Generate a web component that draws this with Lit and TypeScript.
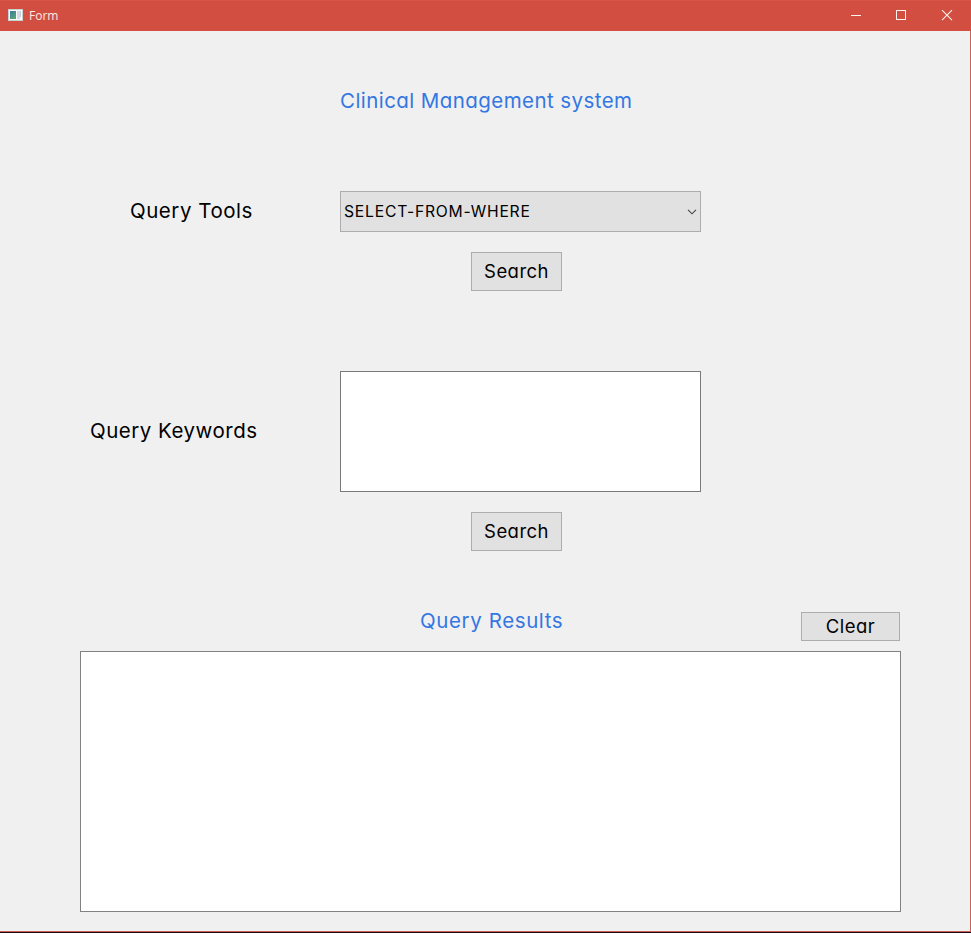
import { LitElement, html, css } from "lit";
import { customElement } from "lit/decorators.js";

@customElement("app-root")
export class AppRoot extends LitElement {
  static styles = css`
    :host {
      display: block;
      font-family: Inter, "Liberation Sans", sans-serif;
      font-feature-settings: "cv11";
      font-weight: 380;
      color: #000;
    }
    * { box-sizing: border-box; }
    .window {
      display: flex;
      flex-direction: column;
      width: 971px;
      height: 933px;
      background: #f0f0f0;
      border-bottom: 1px solid #1c0908;
      overflow: hidden;
    }
    .titlebar {
      display: flex;
      align-items: center;
      flex: none;
      height: 31px;
      padding-left: 8px;
      background: #d14e40;
      border-top: 1px solid #d7564c;
      color: #fbe9e4;
    }
    .titlebar svg { display: block; flex: none; }
    .app-icon { margin-bottom: 2px; }
    .caption {
      flex: 1;
      margin-left: 6px;
      font: 12px/16px "Open Sans", "Noto Sans", sans-serif;
    }
    .controls { display: flex; }
    .body {
      flex: 1;
      border-right: 1px solid #c9605a;
      border-bottom: 1px solid #c9605a;
      padding: 55px 69px 0 80px;
    }
    .text {
      font-size: 20.5px;
      line-height: 30px;
      white-space: nowrap;
    }
    .heading { color: #3477e2; }
    .title { margin-left: 260px; letter-spacing: 0.43px; }
    .row {
      display: grid;
      grid-template-columns: 260px 361px;
      align-items: center;
    }
    .row .text { padding-bottom: 2px; }
    .tools { margin-top: 75px; }
    .keywords { margin-top: 80px; }
    .tools-label { padding-left: 50px; letter-spacing: 0.53px; }
    .keywords-label { padding-left: 10px; letter-spacing: 0.5px; }
    .select {
      display: flex;
      align-items: center;
      justify-content: space-between;
      height: 41px;
      padding: 0 3px 0 3px;
      background: #e1e1e1;
      border: 1px solid #adadad;
      font-size: 15.7px;
      letter-spacing: 0.78px;
    }
    .select span { padding-bottom: 1px; }
    .field { height: 121px; background: #fff; border: 1px solid #7a7a7a; }
    .button {
      display: flex;
      align-items: center;
      justify-content: center;
      width: 91px;
      height: 39px;
      padding-bottom: 2px;
      background: #e1e1e1;
      border: 1px solid #adadad;
      font-size: 18.5px;
      letter-spacing: 0.45px;
    }
    .search { margin: 20px 0 0 391px; }
    .results-bar {
      display: flex;
      align-items: flex-start;
      justify-content: space-between;
      margin-top: 55px;
      height: 45px;
      padding-left: 340px;
    }
    .results-title { letter-spacing: 0.6px; }
    .clear { width: 99px; height: 29px; margin: 6px 1px 0 0; }
    .results { width: 821px; height: 261px; background: #fff; border: 1px solid #828282; }
  `;

  private button(label: string, kind: string) {
    return html`<div class="button ${kind}" role="button">${label}</div>`;
  }

  render() {
    return html`
      <div class="window">
        <div class="titlebar">
          <svg class="app-icon" width="15" height="12" viewBox="0 0 15 12">
            <defs>
              <linearGradient id="pane" x2="0.6" y2="1">
                <stop stop-color="#3f79a0" />
                <stop offset="1" stop-color="#55a57c" />
              </linearGradient>
            </defs>
            <rect width="15" height="12" fill="#c9d0d2" />
            <rect x="1" y="1" width="13" height="10" fill="#fafafa" />
            <rect x="2" y="2" width="6" height="8" fill="url(#pane)" />
            <rect x="9" y="2" width="3" height="8" fill="#d3dce4" />
            <rect x="12" y="2" width="1" height="6" fill="#c3ccd3" />
          </svg>
          <span class="caption">Form</span>
          <div class="controls">
            <svg width="46" height="30" viewBox="0 0 46 30"><path d="M22 14.5h10" stroke="#fff3ee" /></svg>
            <svg width="45" height="30" viewBox="0 0 45 30"><rect x="21.5" y="9.5" width="9" height="9" fill="none" stroke="#fff3ee" /></svg>
            <svg width="51" height="30" viewBox="0 0 51 30"><path d="M22 9.2l10 10M32 9.2l-10 10" stroke="#fff3ee" stroke-width="1.1" /></svg>
          </div>
        </div>
        <div class="body">
          <div class="text heading title">Clinical Management system</div>
          <div class="row tools">
            <span class="text tools-label">Query Tools</span>
            <div class="select">
              <span>SELECT-FROM-WHERE</span>
              <svg width="10" height="6" viewBox="0 0 10 6"><path d="M1 0.8l4 4 4-4" fill="none" stroke="#444" stroke-width="1.1" /></svg>
            </div>
          </div>
          ${this.button("Search", "search")}
          <div class="row keywords">
            <span class="text keywords-label">Query Keywords</span>
            <div class="field"></div>
          </div>
          ${this.button("Search", "search")}
          <div class="results-bar">
            <span class="text heading results-title">Query Results</span>
            ${this.button("Clear", "clear")}
          </div>
          <div class="results"></div>
        </div>
      </div>
    `;
  }
}
